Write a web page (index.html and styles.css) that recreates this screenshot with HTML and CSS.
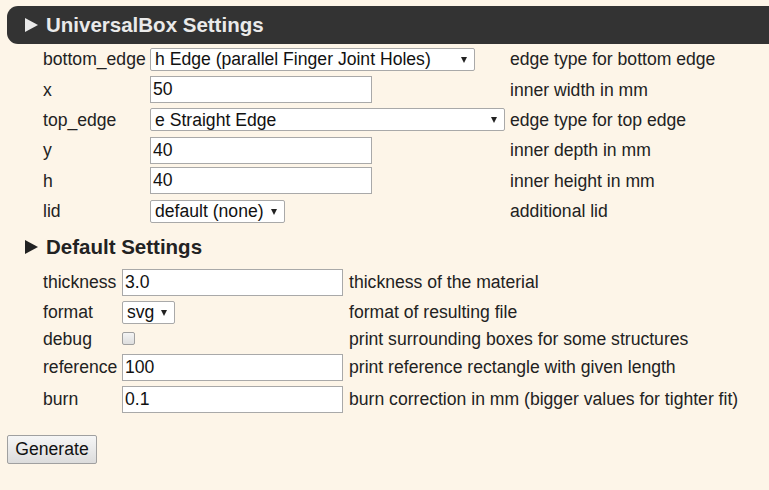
FILE: index.html
```html
<!DOCTYPE html>
<html>
<head>
<meta charset="utf-8">
<link rel="stylesheet" href="styles.css">
</head>
<body>
<form class="page">
  <h2 class="bar">
    <svg class="tri" width="13" height="14" viewBox="0 0 13 14"><polygon points="0,0 13,7 0,14" fill="currentColor"/></svg>
    <span>UniversalBox Settings</span>
  </h2>
  <div class="grid g1">
    <label class="lbl">bottom_edge</label>
    <div class="cell"><span class="sel w325"><select><option>h Edge (parallel Finger Joint Holes)</option></select></span></div>
    <div class="desc">edge type for bottom edge</div>

    <label class="lbl">x</label>
    <div class="cell"><input class="txt w222" type="text" value="50"></div>
    <div class="desc">inner width in mm</div>

    <label class="lbl">top_edge</label>
    <div class="cell"><span class="sel w355"><select><option>e Straight Edge</option></select></span></div>
    <div class="desc">edge type for top edge</div>

    <label class="lbl">y</label>
    <div class="cell"><input class="txt w222" type="text" value="40"></div>
    <div class="desc">inner depth in mm</div>

    <label class="lbl">h</label>
    <div class="cell"><input class="txt w222" type="text" value="40"></div>
    <div class="desc">inner height in mm</div>

    <label class="lbl">lid</label>
    <div class="cell"><span class="sel w135"><select><option>default (none)</option></select></span></div>
    <div class="desc">additional lid</div>
  </div>

  <h2 class="sub">
    <svg class="tri" width="13" height="14" viewBox="0 0 13 14"><polygon points="0,0 13,7 0,14" fill="currentColor"/></svg>
    <span>Default Settings</span>
  </h2>
  <div class="grid g2">
    <label class="lbl">thickness</label>
    <div class="cell"><input class="txt w221" type="text" value="3.0"></div>
    <div class="desc">thickness of the material</div>

    <label class="lbl">format</label>
    <div class="cell"><span class="sel w53"><select><option>svg</option></select></span></div>
    <div class="desc">format of resulting file</div>

    <label class="lbl">debug</label>
    <div class="cell"><input class="chk" type="checkbox"></div>
    <div class="desc">print surrounding boxes for some structures</div>

    <label class="lbl">reference</label>
    <div class="cell"><input class="txt w221" type="text" value="100"></div>
    <div class="desc">print reference rectangle with given length</div>

    <label class="lbl">burn</label>
    <div class="cell"><input class="txt w221" type="text" value="0.1"></div>
    <div class="desc">burn correction in mm (bigger values for tighter fit)</div>
  </div>

  <button type="button" class="btn">Generate</button>
</form>
</body>
</html>
```
FILE: styles.css
```css
html, body {
  margin: 0;
  padding: 0;
  overflow: hidden;
  background: #fdf5e8;
}
body {
  font-family: "Liberation Sans", Arial, sans-serif;
  font-size: 17.6px;
  color: #222;
}
.page {
  padding: 6px 0 0 7px;
  display: flex;
  flex-direction: column;
  align-items: flex-start;
}
.bar {
  align-self: stretch;
  margin: 0;
  height: 38px;
  box-sizing: border-box;
  background: #333;
  color: #eaeaea;
  border-radius: 11px 0 0 11px;
  display: flex;
  align-items: center;
  gap: 8px;
  padding-left: 18px;
  font-size: 20.5px;
  font-weight: bold;
}
.sub {
  margin: 0;
  height: 40px;
  box-sizing: border-box;
  padding-top: 2px;
  display: flex;
  align-items: center;
  gap: 8px;
  padding-left: 18px;
  font-size: 20.5px;
  font-weight: bold;
  color: #222;
}
.tri {
  display: block;
  flex: none;
}
.grid {
  display: grid;
  margin-left: 36px;
  align-items: center;
}
.g1 {
  grid-template-columns: 107px 360px auto;
  grid-auto-rows: 30.4px;
}
.g2 {
  grid-template-columns: 79px 227px auto;
  grid-template-rows: 32px 28px 25px 32px 32px;
}
.lbl, .desc {
  white-space: nowrap;
  line-height: 20px;
}
.cell {
  display: flex;
  align-items: center;
}
.txt {
  box-sizing: border-box;
  height: 27px;
  margin: 0;
  border: 1px solid #a9a9a9;
  background: #fff;
  font-family: "Liberation Sans", Arial, sans-serif;
  font-size: 17.6px;
  color: #111;
  padding: 0 2px;
  outline: none;
}
.w222 { width: 222px; }
.w221 { width: 221px; }
.sel {
  position: relative;
  display: inline-block;
  height: 23px;
}
.sel select {
  appearance: none;
  -webkit-appearance: none;
  box-sizing: border-box;
  width: 100%;
  height: 23px;
  margin: 0;
  border: 1px solid #a9a9a9;
  border-radius: 2px;
  background: #fff;
  font-family: "Liberation Sans", Arial, sans-serif;
  font-size: 17.6px;
  color: #111;
  padding: 0 0 0 4px;
  outline: none;
}
.sel::after {
  content: "";
  position: absolute;
  right: 8px;
  top: 9px;
  border-left: 3.5px solid transparent;
  border-right: 3.5px solid transparent;
  border-top: 6px solid #222;
  pointer-events: none;
}
.w325 { width: 325px; }
.w355 { width: 355px; }
.w135 { width: 135px; }
.w53 { width: 53px; }
.chk {
  appearance: none;
  -webkit-appearance: none;
  width: 13px;
  height: 13px;
  margin: 0;
  border: 1px solid #a0a0a0;
  border-radius: 2px;
  background: linear-gradient(#f4f4f4, #dedede);
  box-sizing: border-box;
}
.btn {
  margin-top: 20px;
  width: 90px;
  height: 29px;
  box-sizing: border-box;
  border: 1px solid #a0a0a0;
  border-radius: 2px;
  background: linear-gradient(#f6f6f6, #dcdcdc);
  font-family: "Liberation Sans", Arial, sans-serif;
  font-size: 17.6px;
  color: #111;
  padding: 0;
}
```
